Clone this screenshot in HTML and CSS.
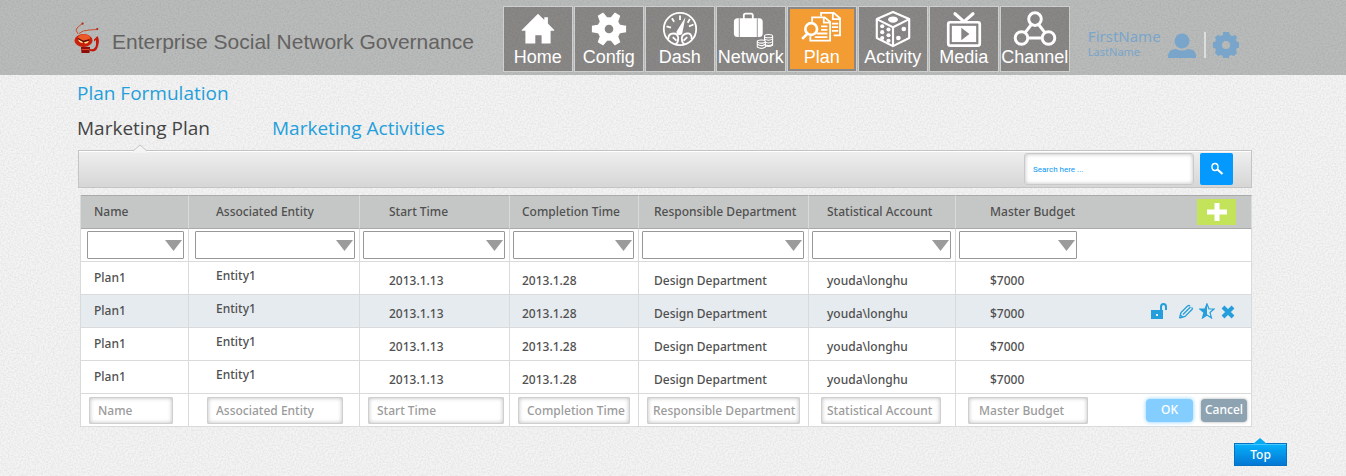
FILE: index.html
```
<!DOCTYPE html>
<html lang="en">
<head>
<meta charset="utf-8">
<title>Enterprise Social Network Governance</title>
<link rel="stylesheet" href="styles.css">
</head>
<body>
<header class="site-header">
  <a class="brand" href="#">
    <svg class="brand-logo" viewBox="0 0 28 32" aria-hidden="true">
      <path d="M4 12Q1 8 3 6T8.500 1.500M5 11.500Q9 8 15 8T23.500 7" fill="none" stroke="#c8502a" stroke-width="1"/>
      <circle cx="8.600" cy="1.600" r="1.100" fill="#a8281c"/><circle cx="23.300" cy="7" r="1.100" fill="#a8281c"/>
      <path d="M20 17.500L23.500 14Q26 18 24 24Q23 29 19 29.500L16 29V27Q21 28 22 23V18L20 19.500Z" fill="#c3180c"/>
      <ellipse cx="9.500" cy="18.500" rx="9" ry="6.500" fill="#c9200a"/>
      <ellipse cx="10" cy="15.500" rx="6" ry="3.200" fill="#ec5a28"/>
      <path d="M4 17L9 19.500L8.500 21Q5 21 4 17ZM10 20L15 18.500Q14 22 11 21.500Z" fill="#ffe6a0"/>
      <path d="M4 16.500L9.500 19.500L15 18" fill="none" stroke="#5c0b05" stroke-width="1.400"/>
      <path d="M7 25H16L15.500 31H7.500Z" fill="#8e0d08"/><path d="M8 27.500H15" stroke="#df4a2d"/>
    </svg>
    <span class="brand-name">Enterprise Social Network Governance</span>
  </a>
  <nav class="main-nav" aria-label="Main">
    <a class="nav-item" href="#"><svg class="nav-icon" viewBox="0 0 40 40"><path fill="#fff" d="M20 3L27 10V7H31V14L38 21V22H34V36H24V27H17V36H6V22H2V21Z"/></svg>Home</a>
    <a class="nav-item" href="#"><svg class="nav-icon" viewBox="0 0 40 40"><g fill="#fff"><circle cx="20" cy="20" r="13"/><path d="M15 9L16.500 1H23.500L25 9Z" transform="rotate(30 20 20)"/><path d="M15 9L16.500 1H23.500L25 9Z" transform="rotate(90 20 20)"/><path d="M15 9L16.500 1H23.500L25 9Z" transform="rotate(150 20 20)"/><path d="M15 9L16.500 1H23.500L25 9Z" transform="rotate(210 20 20)"/><path d="M15 9L16.500 1H23.500L25 9Z" transform="rotate(270 20 20)"/><path d="M15 9L16.500 1H23.500L25 9Z" transform="rotate(330 20 20)"/></g><circle cx="20" cy="20" r="4.800" fill="#878584"/></svg>Config</a>
    <a class="nav-item" href="#"><svg class="nav-icon" viewBox="0 0 40 40"><g fill="none" stroke="#fff" stroke-width="2"><circle cx="20" cy="20" r="18"/><path d="M20 5V10M11 8L13.500 12M5 17L10 18.500M30 17L35 15M31 9L28.500 13M7 31Q7 25 12.500 25T18 30.500Q18 35 15 37M25 37Q22 35 22 30.500T27.500 25T33 31M12 29L16 33M28 29L24 33"/></g><path d="M26 7L22.500 25A3.500 3.500 0 0 1 16 23Z" fill="#fff"/></svg>Dash</a>
    <a class="nav-item" href="#"><svg class="nav-icon" viewBox="0 0 40 40"><path d="M12 9V5Q12 3 14 3H20Q22 3 22 5V9" fill="none" stroke="#fff" stroke-width="2"/><rect x="1" y="8" width="32" height="21" rx="4" fill="#fff"/><path d="M7 8V29M27 8V29" stroke="#918f8e"/><g fill="#878584" stroke="#fff" stroke-width="1.200"><path d="M35 28V38Q39.500 41 44 38V28"/><ellipse cx="39.500" cy="28" rx="4.500" ry="1.800"/><path d="M35 31Q39.500 34 44 31M35 34Q39.500 37 44 34M35 37Q39.500 40 44 37" fill="none"/><path d="M27 34V40Q31.500 43 36 40V34"/><ellipse cx="31.500" cy="34" rx="4.500" ry="1.700"/><path d="M27 37Q31.500 40 36 37" fill="none"/></g></svg>Network</a>
    <a class="nav-item nav-item-current" href="#" aria-current="page"><svg class="nav-icon" viewBox="0 0 40 40"><g fill="none" stroke="#fff" stroke-width="2"><path d="M19 6V2H33L40 8V27H33M32 2V9H40M31 14H38M31 18H38M31 22H38"/><path d="M9 12V7H23L29 12V33H7V28M22 7V13H29M19 17H26M19 21H26M14 25H26M12 29H26"/><circle cx="8" cy="20" r="6.500" stroke-width="3"/><path d="M4 25L-2 31" stroke-width="3"/></g></svg>Plan</a>
    <a class="nav-item" href="#"><svg class="nav-icon" viewBox="0 0 40 40"><g fill="none" stroke="#fff" stroke-width="2.400" stroke-linejoin="round"><path d="M20 1L38 9V30L20 39L2 30V9ZM2 9L20 18L38 9M20 18V39"/></g><g fill="#fff"><ellipse cx="20" cy="9.500" rx="5.500" ry="3.500"/><circle cx="8" cy="17" r="2.300"/><circle cx="15" cy="20.500" r="2.300"/><circle cx="8" cy="23.500" r="2.300"/><circle cx="15" cy="27" r="2.300"/><circle cx="8" cy="30" r="2.300"/><circle cx="15" cy="33" r="2.300"/><circle cx="32" cy="20" r="2.600"/><circle cx="26" cy="30" r="2.600"/></g></svg>Activity</a>
    <a class="nav-item" href="#"><svg class="nav-icon" viewBox="0 0 40 40"><path d="M10 3L19 11M30 3L21 11" stroke="#fff" stroke-width="3.500" stroke-linecap="round"/><rect x="2.500" y="12.500" width="35" height="26" rx="2" fill="none" stroke="#fff" stroke-width="3"/><rect x="6.500" y="16.500" width="27" height="18" fill="#fff"/><path d="M17 18.500L26 25.500L17 32.500Z" fill="#878584"/></svg>Media</a>
    <a class="nav-item" href="#"><svg class="nav-icon" viewBox="0 0 40 40"><g fill="none" stroke="#fff" stroke-width="3.300"><circle cx="20" cy="9" r="7"/><circle cx="5" cy="30" r="7"/><circle cx="35" cy="30" r="7"/><path d="M16 15L9 24M24 15L31 24M12 30H28"/></g></svg>Channel</a>
  </nav>
  <div class="account">
    <a class="account-name" href="#"><span class="first-name">FirstName</span><span class="last-name">LastName</span></a>
    <svg class="account-photo" viewBox="0 0 28 26" aria-hidden="true"><circle cx="14" cy="9" r="7.500"/><path d="M0 26V23Q1 17 8 17Q14 20 20 17Q27 17 28 23V26Z"/></svg>
    <button class="settings" type="button" aria-label="Settings"><svg viewBox="0 0 26 26"><path fill-rule="evenodd" d="M10 0H16L17 3L19 4L22 3L24 5L23 8L24 10H26V16H24L23 18L24 21L21 24L18 23L16 24V26H10V24L8 23L5 24L2 21L3 18L2 16H0V10H2L3 8L2 5L5 3L8 4L10 3ZM13 9A4 4 0 1 0 13 17A4 4 0 1 0 13 9Z"/></svg></button>
  </div>
</header>
<main class="page">
  <h1 class="page-title">Plan Formulation</h1>
  <nav class="tabs" aria-label="Sections">
    <a class="tab tab-current" href="#" aria-current="page">Marketing Plan</a>
    <a class="tab" href="#">Marketing Activities</a>
  </nav>
  <form class="toolbar">
    <svg class="toolbar-notch" viewBox="0 0 14 9" aria-hidden="true"><path d="M0 7L7 1L14 7V9H0Z" fill="#f4f4f4"/><path d="M0 7L7 1L14 7" fill="none" stroke="#c4c4c4"/></svg>
    <input class="search-field" type="search" placeholder="Search here ..." aria-label="Search">
    <button class="search-button" type="submit" aria-label="Search"><svg viewBox="0 0 14 14"><ellipse cx="5" cy="5" rx="3" ry="3.500" fill="none" stroke="#fff" stroke-width="1.400"/><path d="M7.500 7.500L12.500 12" stroke="#fff" stroke-width="2.200"/></svg></button>
  </form>
  <table class="plans">
    <colgroup><col class="w-name"><col class="w-entity"><col class="w-start"><col class="w-completion"><col class="w-department"><col class="w-account"><col></colgroup>
    <thead>
      <tr>
        <th class="name">Name</th><th class="entity">Associated Entity</th><th class="start">Start Time</th><th class="completion">Completion Time</th><th class="department">Responsible Department</th><th class="account-col">Statistical Account</th>
        <th class="budget"><div class="split">Master Budget<button class="add" type="button" aria-label="Add plan"><svg viewBox="0 0 20 20"><path d="M7.500 1H12.500V7.500H20V12.500H12.500V19H7.500V12.500H0V7.500H7.500Z" fill="#fff"/></svg></button></div></th>
      </tr>
    </thead>
    <tbody>
      <tr class="filters">
        <td class="roomy"><select aria-label="Filter by name"><option></option></select></td>
        <td class="roomy"><select aria-label="Filter by entity"><option></option></select></td>
        <td><select aria-label="Filter by start time"><option></option></select></td>
        <td><select aria-label="Filter by completion time"><option></option></select></td>
        <td><select aria-label="Filter by department"><option></option></select></td>
        <td><select aria-label="Filter by account"><option></option></select></td>
        <td><select class="narrow" aria-label="Filter by budget"><option></option></select></td>
      </tr>
      <tr class="plan"><td class="name">Plan1</td><td class="entity">Entity1</td><td class="start">2013.1.13</td><td class="completion">2013.1.28</td><td class="department">Design Department</td><td class="account-col">youda\longhu</td><td class="budget">$7000</td></tr>
      <tr class="plan selected"><td class="name">Plan1</td><td class="entity">Entity1</td><td class="start">2013.1.13</td><td class="completion">2013.1.28</td><td class="department">Design Department</td><td class="account-col">youda\longhu</td>
        <td class="budget"><div class="split">$7000<span class="row-actions">
          <button type="button" aria-label="Unlock"><svg viewBox="0 0 16 16"><path fill-rule="evenodd" d="M0 7H9V4Q9 0 12.500 0T16 4V7H14V4Q14 2 12.500 2T11 4V7H12V16H0ZM5 11V13H7V11Z" fill="#259fdb"/></svg></button>
          <button type="button" aria-label="Edit"><svg viewBox="0 0 16 16"><path d="M1.500 15L3 9.500L9.500 3Q11 2 12 3M1.500 15L7 13.500L14 6.500Q15 5.500 13.500 4.500M5 11.500L12.500 4M2.500 12L4.500 14" fill="none" stroke="#259fdb" stroke-width="1.300"/></svg></button>
          <button type="button" aria-label="Favorite"><svg viewBox="0 0 16 16"><path d="M8 1L10 6H15L11 9.500L12.500 15L8 12L3.500 15L5 9.500L1 6H6Z" fill="none" stroke="#259fdb" stroke-width="1.200"/><path d="M8 0V12L3 15.500L5 9.500L0 6H6Z" fill="#259fdb"/></svg></button>
          <button type="button" aria-label="Delete"><svg viewBox="0 0 16 16"><path d="M3 4L13 14M13 4L3 14" stroke="#259fdb" stroke-width="4"/></svg></button>
        </span></div></td></tr>
      <tr class="plan"><td class="name">Plan1</td><td class="entity">Entity1</td><td class="start">2013.1.13</td><td class="completion">2013.1.28</td><td class="department">Design Department</td><td class="account-col">youda\longhu</td><td class="budget">$7000</td></tr>
      <tr class="plan"><td class="name">Plan1</td><td class="entity">Entity1</td><td class="start">2013.1.13</td><td class="completion">2013.1.28</td><td class="department">Design Department</td><td class="account-col">youda\longhu</td><td class="budget">$7000</td></tr>
      <tr class="entry">
        <td class="inset-s"><input class="field field-s" placeholder="Name" aria-label="Name"></td>
        <td class="inset-l"><input class="field field-l" placeholder="Associated Entity" aria-label="Associated Entity"></td>
        <td class="inset-s"><input class="field field-l" placeholder="Start Time" aria-label="Start Time"></td>
        <td class="inset-s"><input class="field field-m" placeholder="Completion Time" aria-label="Completion Time"></td>
        <td class="inset-s"><input class="field field-xl" placeholder="Responsible Department" aria-label="Responsible Department"></td>
        <td class="inset-m"><input class="field field-n" placeholder="Statistical Account" aria-label="Statistical Account"></td>
        <td class="inset-m last"><div class="split"><input class="field field-w" placeholder="Master Budget" aria-label="Master Budget"><span class="entry-actions"><button class="ok" type="button">OK</button><button class="cancel" type="button">Cancel</button></span></div></td>
      </tr>
    </tbody>
  </table>
</main>
<footer class="page-foot"><a class="to-top" href="#">Top</a></footer>
</body>
</html>
```
FILE: styles.css
```
* { box-sizing: border-box; }
:root {
  --grain: url("data:image/svg+xml,%3Csvg xmlns='http://www.w3.org/2000/svg' width='200' height='200'%3E%3Cfilter id='n' x='0' y='0' width='100%25' height='100%25'%3E%3CfeTurbulence type='fractalNoise' baseFrequency='.6' numOctaves='2' stitchTiles='stitch'/%3E%3CfeColorMatrix values='0 0 0 0 0 0 0 0 0 0 0 0 0 0 0 .13 0 0 0 -.045'/%3E%3C/filter%3E%3Crect width='200' height='200' filter='url(%23n)'/%3E%3C/svg%3E");
  --blue: #259fdb;
}
body {
  margin: 0;
  background: #f4f4f4 var(--grain);
  color: #505050;
  font: 500 12px/18px "Noto Sans", sans-serif;
}
button, input, select { font: inherit; margin: 0; }
button { padding: 0; border: 0; background: none; cursor: pointer; }
a { text-decoration: none; }
svg { display: block; }

.site-header {
  display: flex;
  align-items: flex-start;
  height: 75px;
  padding: 6px 0 0 74px;
  background: #b9bcba var(--grain);
}
.brand { display: flex; align-items: center; gap: 10px; margin: 16px 29px 0 0; color: #646262; }
.brand-logo { width: 28px; height: 32px; }
.brand-name { padding-top: 8px; font: 21px/24px "Liberation Sans", sans-serif; white-space: nowrap; }
.main-nav { display: flex; gap: 1px; }
.nav-item {
  display: flex;
  flex-direction: column;
  align-items: center;
  width: 70px;
  height: 66px;
  padding-top: 4px;
  border: 1px solid #cdcfce;
  background: #8a8887 var(--grain);
  color: #fff;
  font: 18px/20px "Liberation Sans", sans-serif;
}
.nav-icon { width: 36px; height: 36px; overflow: visible; }
.nav-item-current { background: #f39c33; box-shadow: inset 0 0 0 2px #8a8887; }
.account { display: flex; align-items: flex-end; height: 52px; margin-left: 18px; color: #7aa5cb; fill: #7aa5cb; }
.account-name { display: flex; flex-direction: column; margin-right: 7px; color: inherit; font-weight: 400; }
.first-name { font-size: 15px; line-height: 17px; }
.last-name { font-size: 11px; line-height: 13px; }
.account-photo { width: 28px; height: 26px; }
.settings { margin-left: 8px; padding-left: 7px; border-left: 2px solid #dcdedd; fill: inherit; }
.settings svg { width: 26px; height: 26px; }

.page { padding: 4px 94px 0 77px; }
.page-title, .tab { font: 19px/28px "Open Sans", sans-serif; }
.page-title { margin: 0; color: var(--blue); }
.tabs { display: flex; gap: 62px; margin-top: 7px; }
.tab { color: var(--blue); }
.tab-current { color: #444; }
.toolbar {
  position: relative;
  display: flex;
  justify-content: flex-end;
  gap: 6px;
  height: 38px;
  margin: 8px 0 0 1px;
  padding: 2px 18px;
  border: 1px solid #c4c4c4;
  background: linear-gradient(#efefef, #d6d6d6);
  box-shadow: inset 0 1px #fff;
}
.toolbar-notch { position: absolute; left: 54px; top: -7px; width: 14px; height: 9px; }
.search-field {
  width: 170px;
  height: 32px;
  padding: 0 8px;
  border: 1px solid #c9c9c9;
  border-radius: 3px;
  box-shadow: inset 0 0 4px #bbb;
  background: #fff;
  font: 8px/12px "Roboto", sans-serif;
}
.search-field::placeholder { color: #0a97f5; opacity: 1; }
.search-button { display: grid; place-items: center; width: 33px; height: 32px; border-radius: 2px; background: #0399ff; }
.search-button svg { width: 14px; height: 14px; }

.plans {
  width: calc(100% - 3px);
  margin: 7px 0 0 3px;
  border-collapse: separate;
  border-spacing: 0;
  border-left: 1px solid #d9dadb;
  table-layout: fixed;
}
.w-name { width: 108px; }
.w-entity { width: 171px; }
.w-start { width: 150px; }
.w-completion { width: 129px; }
.w-department { width: 170px; }
.w-account { width: 147px; }
.plans th, .plans td {
  height: 33px;
  padding: 0;
  border: 0 solid #d9dadb;
  border-width: 0 1px 1px 0;
  background: #fff;
  text-align: left;
  font-weight: 500;
  white-space: nowrap;
}
.plans th {
  height: 34px;
  border-top: 1px solid #a9abaa;
  border-bottom-color: #a9abaa;
  background: #c5c7c6;
}
.plans .name { padding-left: 13px; }
.plans .entity { padding-left: 27px; }
.plans .start { padding-left: 29px; }
.plans .completion { padding-left: 12px; }
.plans .department { padding-left: 15px; }
.plans .account-col { padding-left: 18px; }
.plans .budget { padding: 0 15px 0 34px; }
.plan .entity { padding-bottom: 4px; }
.plan .start, .plan .completion, .plan .department, .plan .account-col, .plan .budget { padding-top: 5px; }
.plans .selected td { background: #e6ebef; }
.split { display: flex; align-items: center; justify-content: space-between; }
.add { display: grid; place-items: center; width: 39px; height: 26px; background: #c3e35b; }
.add svg { width: 20px; height: 20px; }
.row-actions { display: flex; gap: 5px; margin-top: -6px; }
.row-actions button:first-child { margin-right: 6px; }
.row-actions svg { width: 16px; height: 16px; }

.plans .filters td { padding: 0 4px 0 3px; }
.plans .filters .roomy { padding-left: 6px; }
.filters select {
  display: block;
  width: 100%;
  height: 28px;
  appearance: none;
  border: 1px solid #989898;
  border-radius: 1px;
  background: #fff url("data:image/svg+xml,%3Csvg xmlns='http://www.w3.org/2000/svg' width='17' height='11'%3E%3Cpath d='M0 0H17L8.500 11Z' fill='%239b9b9b'/%3E%3C/svg%3E") no-repeat right 1px center;
}
.filters .narrow { width: 118px; }

.entry .inset-s { padding-left: 8px; }
.entry .inset-m { padding-left: 12px; }
.entry .inset-l { padding-left: 18px; }
.entry .last { padding-right: 4px; }
.field {
  display: block;
  height: 27px;
  padding: 0 0 0 8px;
  border: 1px solid #cfcfcf;
  border-radius: 1px;
  box-shadow: inset 0 0 4px #bbb;
  background: #fff;
}
.field::placeholder { color: #9b9b9b; opacity: 1; }
.field-s { width: 84px; }
.field-m { width: 112px; }
.field-n { width: 120px; padding-left: 5px; }
.field-w { width: 120px; padding-left: 10px; }
.field-l { width: 136px; }
.field-xl { width: 153px; padding-left: 5px; }
.entry-actions { display: flex; gap: 8px; color: #fff; }
.ok, .cancel { height: 23px; border-radius: 4px; color: #fff; line-height: 22px; }
.ok { width: 47px; background: #84ceff; box-shadow: 0 0 4px #84ceff; }
.cancel { width: 46px; background: #8ea3b2; box-shadow: 0 0 3px #aaa; }

.page-foot { display: flex; justify-content: flex-end; padding: 16px 59px 11px 0; }
.to-top {
  position: relative;
  width: 53px;
  border: 1px solid #0572c4;
  background: linear-gradient(#06b0fa, #0478d4);
  box-shadow: inset 0 1px #45c8ff;
  color: #fff;
  line-height: 21px;
  text-align: center;
}
.to-top::before {
  content: "";
  position: absolute;
  left: 18px;
  top: -6px;
  width: 14px;
  height: 6px;
  background: #06aaf2;
  clip-path: polygon(50% 0, 100% 100%, 0 100%);
}
```
